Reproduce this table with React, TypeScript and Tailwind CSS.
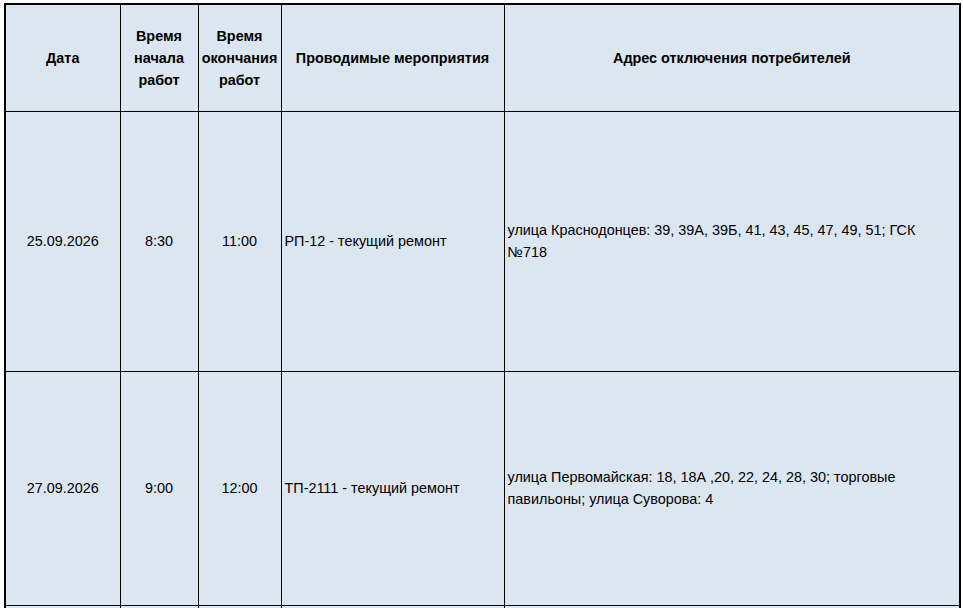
const rows = [
  {
    date: "25.09.2026",
    start: "8:30",
    end: "11:00",
    work: "РП-12 - текущий ремонт",
    address: "улица Краснодонцев: 39, 39А, 39Б, 41, 43, 45, 47, 49, 51; ГСК №718",
    height: "h-[260px]",
  },
  {
    date: "27.09.2026",
    start: "9:00",
    end: "12:00",
    work: "ТП-2111 - текущий ремонт",
    address: "улица Первомайская: 18, 18А ,20, 22, 24, 28, 30; торговые павильоны; улица Суворова: 4",
    height: "h-[234px]",
  },
];

export default function App() {
  return (
    <div className="w-[963px] h-[608px] overflow-hidden bg-white pt-[3px] pl-[4px] font-['Liberation_Sans',Arial,sans-serif] text-[14.4px] leading-[22px] text-black">
      <table className="w-[955px] table-fixed border-collapse bg-[#dce6f1]">
        <colgroup>
          <col className="w-[115px]" />
          <col className="w-[78px]" />
          <col className="w-[83px]" />
          <col className="w-[223px]" />
          <col className="w-[456px]" />
        </colgroup>
        <thead>
          <tr className="h-[107px] font-bold">
            <th className="border border-l-2 border-t-2 border-black text-center align-middle">Дата</th>
            <th className="border border-t-2 border-black text-center align-middle">
              Время
              <br />
              начала
              <br />
              работ
            </th>
            <th className="border border-t-2 border-black text-center align-middle">
              Время
              <br />
              окончания
              <br />
              работ
            </th>
            <th className="border border-t-2 border-black text-center align-middle">Проводимые мероприятия</th>
            <th className="border border-t-2 border-r-2 border-black text-center align-middle">Адрес отключения потребителей</th>
          </tr>
        </thead>
        <tbody>
          {rows.map((r) => (
            <tr key={r.date} className={r.height}>
              <td className="border border-l-2 border-black text-center align-middle">{r.date}</td>
              <td className="border border-black text-center align-middle">{r.start}</td>
              <td className="border border-black text-center align-middle">{r.end}</td>
              <td className="border border-black pl-[3px] align-middle">{r.work}</td>
              <td className="border border-r-2 border-black pl-[3px] pr-[2px] align-middle">{r.address}</td>
            </tr>
          ))}
          <tr className="h-[30px]">
            <td className="border border-l-2 border-black" />
            <td className="border border-black" />
            <td className="border border-black" />
            <td className="border border-black" />
            <td className="border border-r-2 border-black" />
          </tr>
        </tbody>
      </table>
    </div>
  );
}
